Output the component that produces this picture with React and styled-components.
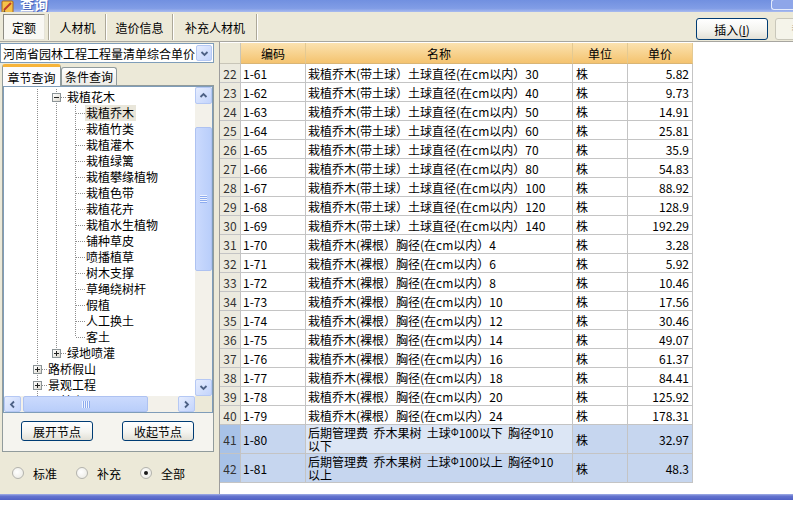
import React from "react";
import styled, { createGlobalStyle, css } from "styled-components";

const GlobalStyle = createGlobalStyle`
  html, body { margin: 0; padding: 0; background: #fff; }
  body {
    font-family: "Noto Sans CJK SC", "Liberation Sans", sans-serif;
    font-size: 12px;
    color: #000;
  }
  * { box-sizing: border-box; }
`;

const VDOT = "repeating-linear-gradient(to bottom, #8f8f8f 0 1px, transparent 1px 2px)";
const HDOT = "repeating-linear-gradient(to right, #8f8f8f 0 1px, transparent 1px 2px)";

const ballPrices = ["5.82", "9.73", "14.91", "25.81", "35.9", "54.83", "88.92", "128.9", "192.29"];
const ballSizes = [30, 40, 50, 60, 70, 80, 100, 120, 140];
const barePrices = ["3.28", "5.92", "10.46", "17.56", "30.46", "49.07", "61.37", "84.41", "125.92", "178.31"];
const bareSizes = [4, 6, 8, 10, 12, 14, 16, 18, 20, 24];

const rows = [
  ...ballSizes.map((s, i) => ({
    n: 22 + i,
    code: `1-${61 + i}`,
    name: `栽植乔木(带土球）土球直径(在cm以内）${s}`,
    price: ballPrices[i],
  })),
  ...bareSizes.map((s, i) => ({
    n: 31 + i,
    code: `1-${70 + i}`,
    name: `栽植乔木(裸根）胸径(在cm以内）${s}`,
    price: barePrices[i],
  })),
];

const treeKids = [
  "栽植乔木", "栽植竹类", "栽植灌木", "栽植绿篱", "栽植攀缘植物", "栽植色带", "栽植花卉",
  "栽植水生植物", "铺种草皮", "喷播植草", "树木支撑", "草绳绕树杆", "假植", "人工换土", "客土",
];

const tree = [
  { label: "栽植花木", guides: [true], exp: "minus" },
  ...treeKids.map((label, i) => ({
    label,
    guides: [true, true],
    last: i === treeKids.length - 1,
    sel: i === 0,
  })),
  { label: "绿地喷灌", guides: [true], exp: "plus", last: true },
  { label: "路桥假山", guides: [], exp: "plus" },
  { label: "景观工程", guides: [], exp: "plus" },
  { label: "园林小品", guides: [], exp: "plus", last: true },
];

/* ---------- window ---------- */

const Window = styled.div`
  width: 793px;
  height: 507px;
  display: flex;
  flex-direction: column;
  overflow: hidden;
  background: #fff;
`;

const TitleBar = styled.div`
  height: 12px;
  flex-shrink: 0;
  display: flex;
  align-items: flex-end;
  overflow: hidden;
  padding-left: 1px;
  background: linear-gradient(#7190e0, #819de6 70%, #a9bbef);
`;

const TitleText = styled.div`
  margin: 0 0 1px 5px;
  font-size: 14px;
  font-weight: bold;
  line-height: 14px;
  color: #fff;
  text-shadow: 1px 1px 0 #4b64b8;
`;

const TitleCtl = styled.div`
  margin-left: auto;
  align-self: flex-start;
  width: 22px;
  height: 11px;
  margin-top: -1px;
  border: 1px solid #e4ebfc;
  border-right: none;
  border-radius: 3px 0 0 3px;
  background: #8ea6e9;
`;

const TitleIcon = () => (
  <svg width="14" height="14" viewBox="0 0 14 14" style={{ marginBottom: -2, flexShrink: 0 }}>
    <rect x="1" y="1" width="11" height="12" rx="1" fill="#f6c24a" stroke="#a8641a" />
    <path d="M3 10 L10 3" stroke="#c0392b" strokeWidth="2" />
    <path d="M3 10 L2.5 12 L4.5 11.5 Z" fill="#333" />
  </svg>
);

/* ---------- toolbar ---------- */

const Toolbar = styled.div`
  height: 30px;
  flex-shrink: 0;
  display: flex;
  align-items: flex-end;
  padding-bottom: 1px;
  background: #ece9d8;
  border-bottom: 1px solid #a7a6a0;
`;

const ToolTabs = styled.div`
  flex: 1;
  display: flex;
  align-items: flex-end;
  padding-left: 3px;
`;

const ToolTab = styled.div`
  width: ${(p) => p.$w}px;
  height: 26px;
  flex-shrink: 0;
  display: flex;
  align-items: center;
  justify-content: center;
  ${(p) =>
    p.$active &&
    css`
      margin-right: 3px;
      background: #f9f8f4;
      border: 1px solid;
      border-color: #8d8b82 #e6e4da #e6e4da #8d8b82;
    `}
`;

const ToolSep = styled.div`
  width: 2px;
  height: 26px;
  flex-shrink: 0;
  border-left: 1px solid #aca899;
  border-right: 1px solid #fff;
`;

const ToolButtons = styled.div`
  width: 97px;
  display: flex;
  gap: 7px;
  overflow: hidden;
`;

const XpButton = styled.button`
  width: ${(p) => p.$w}px;
  height: ${(p) => p.$h || 22}px;
  flex-shrink: 0;
  padding: 0;
  font-family: inherit;
  font-size: 12px;
  color: #000;
  border: 1px solid #003c74;
  border-radius: 3px;
  background: linear-gradient(#ffffff, #f4f4f0 55%, #e2e0d6);
  &:disabled {
    color: #aca899;
    border-color: #c9c7ba;
    background: #f5f4ea;
  }
`;

/* ---------- body ---------- */

const Body = styled.div`
  height: 452px;
  flex-shrink: 0;
  display: flex;
`;

const LeftPanel = styled.div`
  width: 216px;
  flex-shrink: 0;
  display: flex;
  flex-direction: column;
  background: #ece9d8;
`;

const Combo = styled.div`
  width: 214px;
  height: 20px;
  margin-top: 1px;
  display: flex;
  align-items: center;
  border: 1px solid #7f9db9;
  background: #fff;
`;

const ComboText = styled.div`
  flex: 1;
  padding-left: 2px;
  white-space: nowrap;
  overflow: hidden;
`;

const TabsRow = styled.div`
  height: 22px;
  display: flex;
  align-items: flex-end;
  padding-left: 2px;
`;

const PanelTab = styled.div`
  width: ${(p) => p.$w}px;
  height: ${(p) => (p.$on ? 22 : 18)}px;
  display: flex;
  align-items: center;
  justify-content: center;
  border: 1px solid #919b9c;
  border-bottom: none;
  border-radius: 3px 3px 0 0;
  position: relative;
  ${(p) =>
    p.$on
      ? css`
          margin-bottom: -1px;
          z-index: 1;
          padding-top: 1px;
          background: #fcfcfe;
          border-top: 3px solid #f7b43a;
        `
      : css`
          background: linear-gradient(#ffffff, #ecebe6);
        `}
`;

const TabPage = styled.div`
  width: 212px;
  margin-left: 2px;
  border: 1px solid #919b9c;
  background: #f5f4ef;
  display: flex;
  flex-direction: column;
`;

const TreeBox = styled.div`
  width: 210px;
  height: 327px;
  border: 1px solid #7f9db9;
  background: #fff;
  display: grid;
  grid-template-columns: 1fr 17px;
  grid-template-rows: 1fr 16px;
`;

const TreeView = styled.div`
  overflow: hidden;
  padding-top: 2px;
`;

const TreeLine = styled.div`
  height: 16px;
  display: flex;
  align-items: center;
  padding-left: 24px;
  white-space: nowrap;
`;

const Guide = styled.div`
  width: 19px;
  height: 16px;
  flex-shrink: 0;
  ${(p) => p.$line && css`background: ${VDOT} 9px 0 / 1px 16px no-repeat;`}
`;

const Expander = styled.div`
  width: 19px;
  height: 16px;
  flex-shrink: 0;
  display: flex;
  align-items: center;
  justify-content: center;
  background: ${(p) =>
    [
      `${VDOT} 9px 0 / 1px 8px no-repeat`,
      p.$last ? null : `${VDOT} 9px 8px / 1px 8px no-repeat`,
      `${HDOT} 10px 8px / 9px 1px no-repeat`,
    ]
      .filter(Boolean)
      .join(", ")};
`;

const ExpBox = styled.div`
  width: 9px;
  height: 9px;
  margin-top: 1px;
  border: 1px solid #8c9497;
  background: linear-gradient(135deg, #ffffff, #dcd9cf);
  display: flex;
`;

const TreeLabel = styled.div`
  height: 16px;
  line-height: 16px;
  padding: 0 2px 0 1px;
  background: ${(p) => (p.$sel ? "#e9e6da" : "transparent")};
`;

/* ---------- scrollbars ---------- */

const ScrollBtn = styled.div`
  width: ${(p) => p.$w || 17}px;
  height: ${(p) => p.$h || 17}px;
  flex-shrink: 0;
  display: flex;
  align-items: center;
  justify-content: center;
  border: 1px solid #b5c8f4;
  border-radius: 2px;
  background: linear-gradient(135deg, #e6edfe, #c3d4fc);
  ${(p) => p.$m && css`margin: ${p.$m};`}
`;

const VScroll = styled.div`
  grid-row: 1;
  grid-column: 2;
  display: flex;
  flex-direction: column;
  background: #f3f1ea;
`;

const HScroll = styled.div`
  grid-row: 2;
  grid-column: 1;
  display: flex;
  background: #f3f1ea;
`;

const Corner = styled.div`
  background: #ece9d8;
`;

const Track = styled.div`
  flex: 1;
  display: flex;
  flex-direction: ${(p) => (p.$h ? "row" : "column")};
  ${(p) => (p.$h ? "padding-left: 2px;" : "padding-top: 23px;")}
`;

const Thumb = styled.div`
  ${(p) =>
    p.$h
      ? css`
          width: ${p.$len}px;
          height: 100%;
          background: linear-gradient(#cbdafd, #b9cefa);
        `
      : css`
          height: ${p.$len}px;
          width: 100%;
          background: linear-gradient(to right, #cbdafd, #b9cefa);
        `}
  border: 1px solid #aec2f1;
  border-radius: 2px;
  display: flex;
  align-items: center;
  justify-content: center;
`;

const Chevron = ({ dir }) => {
  const pts = {
    up: "1.5,6 4.5,3 7.5,6",
    down: "1.5,3 4.5,6 7.5,3",
    left: "6,1.5 3,4.5 6,7.5",
    right: "3,1.5 6,4.5 3,7.5",
  }[dir];
  return (
    <svg width="9" height="9" viewBox="0 0 9 9">
      <polyline points={pts} fill="none" stroke="#4d6185" strokeWidth="1.8" />
    </svg>
  );
};

const Grip = ({ h }) => (
  <svg width={h ? 8 : 7} height={h ? 7 : 8} viewBox={h ? "0 0 8 7" : "0 0 7 8"}>
    {[0, 2, 4, 6].map((o) =>
      h ? (
        <line key={o} x1={o + 0.5} y1="0" x2={o + 0.5} y2="7" stroke="#eef3fe" />
      ) : (
        <line key={o} x1="0" y1={o + 0.5} x2="7" y2={o + 0.5} stroke="#eef3fe" />
      )
    )}
    {[1, 3, 5, 7].map((o) =>
      h ? (
        <line key={o} x1={o + 0.5} y1="0" x2={o + 0.5} y2="7" stroke="#8cabef" />
      ) : (
        <line key={o} x1="0" y1={o + 0.5} x2="7" y2={o + 0.5} stroke="#8cabef" />
      )
    )}
  </svg>
);

/* ---------- left bottom ---------- */

const ButtonRow = styled.div`
  height: 38px;
  display: flex;
  justify-content: space-between;
  align-items: flex-start;
  padding: 8px 19px 0 18px;
`;

const RadioStrip = styled.div`
  flex: 1;
  display: flex;
  align-items: center;
  gap: 19px;
  padding-left: 12px;
`;

const RadioItem = styled.label`
  display: flex;
  align-items: center;
  gap: 9px;
`;

const RadioDot = styled.span`
  width: 12px;
  height: 12px;
  border-radius: 50%;
  border: 1px solid #b3b3ad;
  background: radial-gradient(circle at 40% 40%, #ffffff, #e8e7e0);
  display: flex;
  align-items: center;
  justify-content: center;
  &::after {
    content: "";
    width: 4px;
    height: 4px;
    border-radius: 50%;
    background: ${(p) => (p.$on ? "#1b1b1b" : "transparent")};
  }
`;

/* ---------- grid ---------- */

const Splitter = styled.div`
  width: 3px;
  flex-shrink: 0;
  background: #ece9d8;
`;

const GridPane = styled.div`
  flex: 1;
  background: #fff;
  border-left: 1px solid #9d9d9d;
  padding-top: 1px;
  overflow: hidden;
`;

const Grid = styled.div`
  display: grid;
  grid-template-columns: 21px 65px 267px 55px 65px;
  grid-template-rows: 21px repeat(19, 19px) 29px 29px;
  width: 473px;
`;

const HeadCell = styled.div`
  display: flex;
  align-items: center;
  justify-content: center;
  border-right: 1px solid ${(p) => (p.$index ? "#c8c5b8" : "#e3c992")};
  border-bottom: 1px solid ${(p) => (p.$index ? "#c8c5b8" : "#d9b576")};
  background: ${(p) => (p.$index ? "#ece9d8" : "linear-gradient(#fbe2b0, #f4c36f)")};
`;

const toneBg = { normal: "#fff", sel: "#c6d6ef", focus: "#dce6f5", index: "#eceadf", indexSel: "#a8c2e7" };

const Cell = styled.div`
  display: flex;
  align-items: center;
  justify-content: ${(p) => p.$align || "flex-start"};
  padding: 0 ${(p) => (p.$align === "flex-end" ? "3px" : "2px")} 0 ${(p) => p.$pl || 2}px;
  white-space: pre;
  line-height: 13px;
  overflow: hidden;
  border-right: 1px solid #c4c4c4;
  border-bottom: 1px solid #c4c4c4;
  background: ${(p) => toneBg[p.$tone || "normal"]};
  color: ${(p) => (p.$index ? "#333" : "#000")};
`;

const Phi = styled.span`
  font-family: "Liberation Sans", sans-serif;
  font-size: 10px;
  vertical-align: 2px;
`;

const FrameBottom = styled.div`
  height: 6px;
  flex-shrink: 0;
  background: linear-gradient(#a3b0e6, #6474cf 35%, #4f60c4);
`;

const Below = styled.div`
  flex: 1;
  background: #fff;
`;

/* ---------- parts ---------- */

const TreeRow = ({ node }) => (
  <TreeLine>
    {node.guides.map((g, i) => (
      <Guide key={i} $line={g} />
    ))}
    <Expander $last={node.last}>
      {node.exp && (
        <ExpBox>
          <svg width="7" height="7" viewBox="0 0 7 7">
            <line x1="1" y1="3.5" x2="6" y2="3.5" stroke="#222" />
            {node.exp === "plus" && <line x1="3.5" y1="1" x2="3.5" y2="6" stroke="#222" />}
          </svg>
        </ExpBox>
      )}
    </Expander>
    <TreeLabel $sel={node.sel}>{node.label}</TreeLabel>
  </TreeLine>
);

const DataRow = ({ r }) => (
  <>
    <Cell $index $tone="index" $align="center">
      <span>{r.n}</span>
    </Cell>
    <Cell>
      <span>{r.code}</span>
    </Cell>
    <Cell>
      <span>{r.name}</span>
    </Cell>
    <Cell $pl={3}>
      <span>株</span>
    </Cell>
    <Cell $align="flex-end">
      <span>{r.price}</span>
    </Cell>
  </>
);

const FeeRow = ({ n, code, kind, price, focus }) => (
  <>
    <Cell $index $tone="indexSel" $align="center">
      <span>{n}</span>
    </Cell>
    <Cell $tone="sel">
      <span>{code}</span>
    </Cell>
    <Cell $tone={focus ? "focus" : "sel"}>
      <span>
        {"后期管理费  乔木果树  土球"}
        <Phi>Φ</Phi>
        {`100${kind}  胸径`}
        <Phi>Φ</Phi>
        {`10\n${kind}`}
      </span>
    </Cell>
    <Cell $tone="sel" $pl={3}>
      <span>株</span>
    </Cell>
    <Cell $tone="sel" $align="flex-end">
      <span>{price}</span>
    </Cell>
  </>
);

export default function App() {
  return (
    <>
      <GlobalStyle />
      <Window>
        <TitleBar>
          <TitleIcon />
          <TitleText>查询</TitleText>
          <TitleCtl />
        </TitleBar>

        <Toolbar>
          <ToolTabs>
            <ToolTab $w={42} $active>定额</ToolTab>
            <ToolSep />
            <ToolTab $w={55}>人材机</ToolTab>
            <ToolSep />
            <ToolTab $w={65}>造价信息</ToolTab>
            <ToolSep />
            <ToolTab $w={82}>补充人材机</ToolTab>
            <ToolSep />
          </ToolTabs>
          <ToolButtons>
            <XpButton $w={72}>
              插入(<u>I</u>)
            </XpButton>
            <XpButton $w={72} disabled>
              替换(<u>R</u>)
            </XpButton>
          </ToolButtons>
        </Toolbar>

        <Body>
          <LeftPanel>
            <Combo>
              <ComboText>河南省园林工程工程量清单综合单价</ComboText>
              <ScrollBtn $w={16} $h={16} $m="0 1px 0 0">
                <Chevron dir="down" />
              </ScrollBtn>
            </Combo>

            <TabsRow>
              <PanelTab $w={59} $on>
                章节查询
              </PanelTab>
              <PanelTab $w={56}>条件查询</PanelTab>
            </TabsRow>

            <TabPage>
              <TreeBox>
                <TreeView>
                  {tree.map((node, i) => (
                    <TreeRow key={i} node={node} />
                  ))}
                </TreeView>
                <VScroll>
                  <ScrollBtn>
                    <Chevron dir="up" />
                  </ScrollBtn>
                  <Track>
                    <Thumb $len={144}>
                      <Grip />
                    </Thumb>
                  </Track>
                  <ScrollBtn>
                    <Chevron dir="down" />
                  </ScrollBtn>
                </VScroll>
                <HScroll>
                  <ScrollBtn $h={16}>
                    <Chevron dir="left" />
                  </ScrollBtn>
                  <Track $h>
                    <Thumb $h $len={125}>
                      <Grip h />
                    </Thumb>
                  </Track>
                  <ScrollBtn $h={16}>
                    <Chevron dir="right" />
                  </ScrollBtn>
                </HScroll>
                <Corner />
              </TreeBox>
              <ButtonRow>
                <XpButton $w={72} $h={20}>
                  展开节点
                </XpButton>
                <XpButton $w={72} $h={20}>
                  收起节点
                </XpButton>
              </ButtonRow>
            </TabPage>

            <RadioStrip>
              <RadioItem>
                <RadioDot />
                标准
              </RadioItem>
              <RadioItem>
                <RadioDot />
                补充
              </RadioItem>
              <RadioItem>
                <RadioDot $on />
                全部
              </RadioItem>
            </RadioStrip>
          </LeftPanel>

          <Splitter />

          <GridPane>
            <Grid>
              <HeadCell $index />
              <HeadCell>编码</HeadCell>
              <HeadCell>名称</HeadCell>
              <HeadCell>单位</HeadCell>
              <HeadCell>单价</HeadCell>
              {rows.map((r) => (
                <DataRow key={r.n} r={r} />
              ))}
              <FeeRow n={41} code="1-80" kind="以下" price="32.97" focus />
              <FeeRow n={42} code="1-81" kind="以上" price="48.3" />
            </Grid>
          </GridPane>
        </Body>

        <FrameBottom />
        <Below />
      </Window>
    </>
  );
}
